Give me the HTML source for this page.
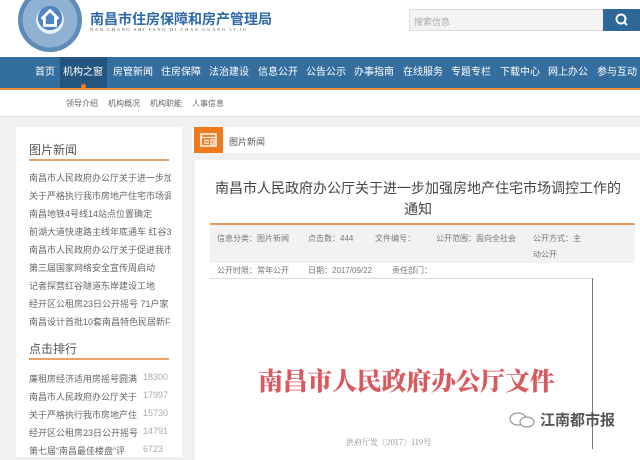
<!DOCTYPE html>
<html><head><meta charset="utf-8"><style>
*{margin:0;padding:0;box-sizing:border-box}
body{width:640px;height:449px;overflow:hidden;background:#f1f1f1;font-family:"Liberation Sans","Noto Sans CJK SC",sans-serif;position:relative}
.a{position:absolute;white-space:nowrap}
.nav span{position:absolute;top:0;line-height:31px;font-size:10px;color:#fff}
.l{font-size:9px;color:#666;left:29px;width:142px;overflow:hidden}
.r{font-size:9px;color:#aaa;left:143px}
.m{font-size:8px;color:#777}
.s{font-size:8px;color:#666;top:98px}
</style></head><body>
<div class="a" style="left:0;top:0;width:640px;height:57px;background:#fff"></div>
<div class="a" style="left:18px;top:-12px;width:64px;height:64px;border-radius:50%;background:radial-gradient(circle,#e8f0f8 0 30%,#8fb2d3 31% 60%,#5e8cb8 61% 80%,#dde5ee 81%)"></div>
<svg class="a" style="left:36px;top:4px" width="28" height="28" viewBox="0 0 30 30"><circle cx="15" cy="15" r="13" fill="#4f86bf"/><path d="M6 16 L15 7 L24 16 M9 14 V23 H21 V14" stroke="#fff" stroke-width="3" fill="none"/></svg>
<div class="a" style="left:90px;top:9px;font-size:14px;font-weight:bold;color:#2e6aa6">南昌市住房保障和房产管理局</div>
<div class="a" style="left:90px;top:27px;font-size:4.5px;color:#555;letter-spacing:1.6px;font-family:'Liberation Serif',serif">NAN CHANG SHI FANG DI CHAN GUANG LI JU</div>
<div class="a" style="left:409px;top:9px;width:195px;height:22px;background:#f3f3f3;border:1px solid #ddd;font-size:9px;color:#aaa;padding:5px 4px">搜索信息</div>
<div class="a" style="left:603px;top:9px;width:37px;height:22px;background:#2f6799"></div>
<svg class="a" style="left:614px;top:12px" width="16" height="16"><circle cx="7" cy="7" r="4.5" stroke="#fff" stroke-width="2" fill="none"/><path d="M10 10 L13 13" stroke="#fff" stroke-width="2"/></svg>
<div class="a nav" style="left:0;top:57px;width:640px;height:31px;background:#346e9e">
<div class="a" style="left:60px;top:0;width:47px;height:31px;background:#23557f"></div>
<div class="a" style="left:81px;top:27px;width:5px;height:5px;border-radius:50%;background:#f07a1e"></div>
<span style="left:35px">首页</span><span style="left:63px">机构之窗</span><span style="left:113px">房管新闻</span><span style="left:161px">住房保障</span><span style="left:209px">法治建设</span><span style="left:258px">信息公开</span><span style="left:306px">公告公示</span><span style="left:354px">办事指南</span><span style="left:403px">在线服务</span><span style="left:451px">专题专栏</span><span style="left:500px">下载中心</span><span style="left:548px">网上办公</span><span style="left:597px">参与互动</span>
</div>
<div class="a" style="left:0;top:88px;width:640px;height:2px;background:#f08a3c"></div>
<div class="a" style="left:0;top:90px;width:640px;height:27px;background:#fff;border-bottom:1px solid #e3e3e3"></div>
<div class="a s" style="left:66px">领导介绍</div><div class="a s" style="left:108px">机构概况</div><div class="a s" style="left:150px">机构职能</div><div class="a s" style="left:192px">人事信息</div>

<div class="a" style="left:16px;top:127px;width:166px;height:330px;background:#fff"></div>
<div class="a" style="left:29px;top:141px;font-size:12px;color:#555">图片新闻</div>
<div class="a" style="left:29px;top:159px;width:140px;height:2px;background:#e8a26b"></div>
<div class="a l" style="top:171px">南昌市人民政府办公厅关于进一步加</div>
<div class="a l" style="top:189px">关于严格执行我市房地产住宅市场调</div>
<div class="a l" style="top:207px">南昌地铁4号线14站点位置确定</div>
<div class="a l" style="top:225px">前湖大道快速路主线年底通车 红谷3</div>
<div class="a l" style="top:243px">南昌市人民政府办公厅关于促进我市</div>
<div class="a l" style="top:261px">第三届国家网络安全宣传周启动</div>
<div class="a l" style="top:279px">记者探营红谷隧道东岸建设工地</div>
<div class="a l" style="top:297px">经开区公租房23日公开摇号 71户家</div>
<div class="a l" style="top:315px">南昌设计首批10套南昌特色民居新F</div>
<div class="a" style="left:29px;top:340px;font-size:12px;color:#555">点击排行</div>
<div class="a" style="left:29px;top:358px;width:140px;height:2px;background:#e8a26b"></div>
<div class="a l" style="top:372px;width:110px">廉租房经济适用房摇号圆满</div><div class="a r" style="top:372px">18300</div>
<div class="a l" style="top:390px;width:110px">南昌市人民政府办公厅关于</div><div class="a r" style="top:390px">17997</div>
<div class="a l" style="top:408px;width:110px">关于严格执行我市房地产住</div><div class="a r" style="top:408px">15730</div>
<div class="a l" style="top:426px;width:110px">经开区公租房23日公开摇号</div><div class="a r" style="top:426px">14791</div>
<div class="a l" style="top:444px;width:110px">第七届“南昌最佳楼盘”评</div><div class="a r" style="top:444px">6723</div>

<div class="a" style="left:192px;top:127px;width:448px;height:26px;background:#fff"></div>
<div class="a" style="left:194px;top:127px;width:29px;height:26px;background:#f07a1e"></div>
<svg class="a" style="left:200px;top:133px" width="17" height="14"><rect x="1" y="1" width="15" height="12" fill="none" stroke="#fff" stroke-width="1.5"/><path d="M1 4.5 H16 M4 7.5 H9 M4 10 H9 M11 7 H14 V11 H11Z" stroke="#fff" stroke-width="1.2" fill="none"/></svg>
<div class="a" style="left:229px;top:135px;font-size:9px;color:#555">图片新闻</div>

<div class="a" style="left:195px;top:160px;width:445px;height:300px;background:#fff"></div>
<div class="a" style="left:208px;top:178px;width:420px;text-align:center;font-size:14px;line-height:21px;color:#444;white-space:normal">南昌市人民政府办公厅关于进一步加强房地产住宅市场调控工作的<br>通知</div>
<div class="a" style="left:210px;top:223px;width:425px;height:2px;background:#e89a5e"></div>
<div class="a" style="left:210px;top:225px;width:425px;height:38px;background:#f2f2f2"></div>
<div class="a m" style="left:217px;top:233px">信息分类：图片新闻</div>
<div class="a m" style="left:308px;top:233px">点击数：444</div>
<div class="a m" style="left:375px;top:233px">文件编号：</div>
<div class="a m" style="left:436px;top:233px">公开范围：面向全社会</div>
<div class="a m" style="left:533px;top:233px">公开方式：主</div>
<div class="a m" style="left:533px;top:249px">动公开</div>
<div class="a m" style="left:217px;top:265px">公开时限：常年公开</div>
<div class="a m" style="left:308px;top:265px">日期：2017/09/22</div>
<div class="a m" style="left:392px;top:265px">责任部门：</div>
<div class="a" style="left:210px;top:278px;width:382px;height:1px;background:#ddd"></div>
<div class="a" style="left:592px;top:278px;width:1px;height:171px;background:#777"></div>
<div class="a" style="left:258px;top:362px;font-size:25px;color:#d95a5e;font-family:'Noto Serif CJK SC',serif;font-weight:900;letter-spacing:-0.3px">南昌市人民政府办公厅文件</div>
<div class="a" style="left:346px;top:437px;font-size:8px;color:#888;font-family:'Noto Serif CJK SC',serif">洪府厅发〔2017〕119号</div>
<svg class="a" style="left:508px;top:410px" width="28" height="20"><ellipse cx="10" cy="9" rx="8" ry="6" fill="none" stroke="#999" stroke-width="1.2"/><ellipse cx="19" cy="12" rx="7" ry="5" fill="#fff" stroke="#999" stroke-width="1.2"/></svg>
<div class="a" style="left:540px;top:409px;font-size:15px;color:#555;font-weight:bold">江南都市报</div>
</body></html>
